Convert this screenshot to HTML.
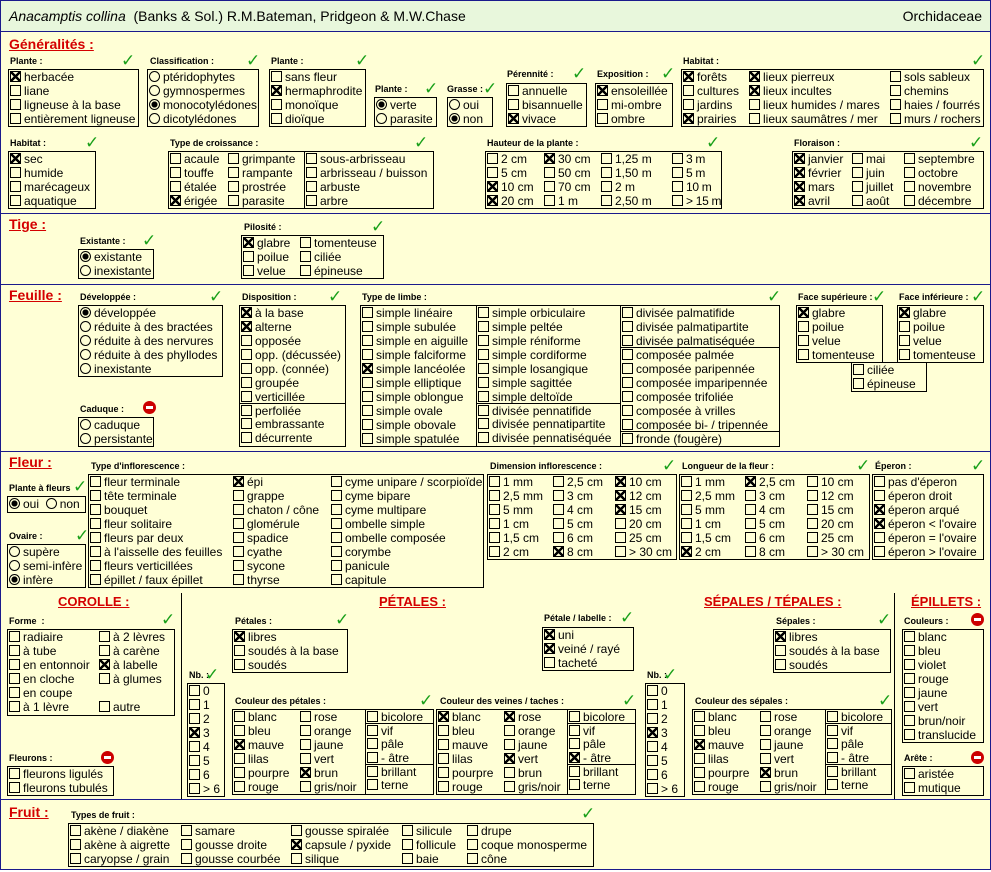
<!DOCTYPE html>
<html><head><meta charset="utf-8"><style>
*{box-sizing:border-box}
body{margin:0;width:991px;height:872px;background:#fff;position:relative;overflow:hidden;font-family:"Liberation Sans",Arial,sans-serif}
#pg{position:absolute;left:0;top:0;width:991px;height:870px;background:#ffffd6;border:1px solid #1a1a8c}
#hd{position:absolute;left:0;top:0;width:989px;height:31px;background:#e8f7dc;border-bottom:1px solid #1a1a8c;font-size:14px;line-height:31px}
.hl{position:absolute;left:0;width:989px;height:1px;background:#1a1a8c}
.vl{position:absolute;width:1px;background:#000}
.st{position:absolute;color:#d40000;font-weight:bold;font-size:14px;text-decoration:underline;line-height:16px}
.t{position:absolute;font-weight:bold;font-size:9px;line-height:10px;white-space:nowrap}
.k{position:absolute;color:#1aa01a;font-size:17px;line-height:18px;font-family:"DejaVu Sans",sans-serif}
.no{position:absolute;width:13px;height:13px;border-radius:50%;background:#c00}
.no:after{content:"";position:absolute;left:3px;top:5px;width:7px;height:3px;background:#fff}
.b{position:absolute;border:1px solid #000;display:flex;font-size:12px;line-height:14px;white-space:nowrap;overflow:hidden}
.b>div{flex:none}
p{margin:0;height:14px;padding-left:1px}
p.s{border-top:1px solid #000;height:14px;margin-top:-1px}
.L{border-left:1px solid #000}
i{display:inline-block;width:11px;height:11px;border:1px solid #000;vertical-align:-1px;margin-right:3px}
i.x{background:linear-gradient(45deg,transparent 40%,#000 40%,#000 60%,transparent 60%),linear-gradient(-45deg,transparent 40%,#000 40%,#000 60%,transparent 60%)}
u{display:inline-block;width:11px;height:11px;border:1px solid #000;border-radius:50%;vertical-align:-1px;margin-right:3px;text-decoration:none}
u.x{background:radial-gradient(circle,#000 45%,transparent 50%)}
</style></head><body><div id="pg">
<div id="hd"><span style="position:absolute;left:8px"><i style="all:unset;font-style:italic">Anacamptis collina</i>&nbsp; (Banks &amp; Sol.) R.M.Bateman, Pridgeon &amp; M.W.Chase</span><span style="position:absolute;right:8px">Orchidaceae</span></div>

<div class="hl" style="top:212px"></div>
<div class="hl" style="top:283px"></div>
<div class="hl" style="top:450px"></div>
<div class="hl" style="top:798px"></div>
<div class="vl" style="left:180px;top:592px;height:206px"></div>
<div class="vl" style="left:893px;top:592px;height:206px"></div>

<div class="st" style="left:8px;top:35px">Généralités :</div>
<div class="t" style="left:9px;top:55px">Plante :</div><div class="k" style="left:120px;top:51px">✓</div>
<div class="b" style="left:7px;top:68px;width:131px;height:58px"><div><p><i class="x"></i>herbacée</p><p><i></i>liane</p><p><i></i>ligneuse à la base</p><p><i></i>entièrement ligneuse</p></div></div>
<div class="t" style="left:149px;top:55px">Classification :</div><div class="k" style="left:245px;top:51px">✓</div>
<div class="b" style="left:146px;top:68px;width:112px;height:58px"><div><p><u></u>ptéridophytes</p><p><u></u>gymnospermes</p><p><u class="x"></u>monocotylédones</p><p><u></u>dicotylédones</p></div></div>
<div class="t" style="left:270px;top:55px">Plante :</div><div class="k" style="left:354px;top:51px">✓</div>
<div class="b" style="left:268px;top:68px;width:97px;height:58px"><div><p><i></i>sans fleur</p><p><i class="x"></i>hermaphrodite</p><p><i></i>monoïque</p><p><i></i>dioïque</p></div></div>
<div class="t" style="left:374px;top:83px">Plante :</div><div class="k" style="left:423px;top:79px">✓</div>
<div class="b" style="left:373px;top:96px;width:63px;height:30px"><div><p><u class="x"></u>verte</p><p><u></u>parasite</p></div></div>
<div class="t" style="left:446px;top:83px">Grasse :</div><div class="k" style="left:482px;top:79px">✓</div>
<div class="b" style="left:446px;top:96px;width:46px;height:30px"><div><p><u></u>oui</p><p><u class="x"></u>non</p></div></div>
<div class="t" style="left:506px;top:68px">Pérennité :</div><div class="k" style="left:571px;top:64px">✓</div>
<div class="b" style="left:505px;top:82px;width:81px;height:44px"><div><p><i></i>annuelle</p><p><i></i>bisannuelle</p><p><i class="x"></i>vivace</p></div></div>
<div class="t" style="left:596px;top:68px">Exposition :</div><div class="k" style="left:660px;top:64px">✓</div>
<div class="b" style="left:594px;top:82px;width:78px;height:44px"><div><p><i class="x"></i>ensoleillée</p><p><i></i>mi-ombre</p><p><i></i>ombre</p></div></div>
<div class="t" style="left:682px;top:55px">Habitat :</div><div class="k" style="left:970px;top:51px">✓</div>
<div class="b" style="left:680px;top:68px;width:303px;height:58px"><div style="width:66px"><p><i class="x"></i>forêts</p><p><i></i>cultures</p><p><i></i>jardins</p><p><i class="x"></i>prairies</p></div><div style="width:141px"><p><i class="x"></i>lieux pierreux</p><p><i class="x"></i>lieux incultes</p><p><i></i>lieux humides / mares</p><p><i></i>lieux saumâtres / mer</p></div><div><p><i></i>sols sableux</p><p><i></i>chemins</p><p><i></i>haies / fourrés</p><p><i></i>murs / rochers</p></div></div>

<div class="t" style="left:9px;top:137px">Habitat :</div><div class="k" style="left:84px;top:133px">✓</div>
<div class="b" style="left:7px;top:150px;width:88px;height:58px"><div><p><i class="x"></i>sec</p><p><i></i>humide</p><p><i></i>marécageux</p><p><i></i>aquatique</p></div></div>
<div class="t" style="left:169px;top:137px">Type de croissance :</div><div class="k" style="left:413px;top:133px">✓</div>
<div class="b" style="left:167px;top:150px;width:266px;height:58px"><div style="width:58px"><p><i></i>acaule</p><p><i></i>touffe</p><p><i></i>étalée</p><p><i class="x"></i>érigée</p></div><div style="width:77px"><p><i></i>grimpante</p><p><i></i>rampante</p><p><i></i>prostrée</p><p><i></i>parasite</p></div><div class="L" style="flex:1"><p><i></i>sous-arbrisseau</p><p><i></i>arbrisseau / buisson</p><p><i></i>arbuste</p><p><i></i>arbre</p></div></div>
<div class="t" style="left:486px;top:137px">Hauteur de la plante :</div><div class="k" style="left:705px;top:133px">✓</div>
<div class="b" style="left:484px;top:150px;width:237px;height:58px"><div style="width:57px"><p><i></i>2 cm</p><p><i></i>5 cm</p><p><i class="x"></i>10 cm</p><p><i class="x"></i>20 cm</p></div><div style="width:57px"><p><i class="x"></i>30 cm</p><p><i></i>50 cm</p><p><i></i>70 cm</p><p><i></i>1 m</p></div><div style="width:71px"><p><i></i>1,25 m</p><p><i></i>1,50 m</p><p><i></i>2 m</p><p><i></i>2,50 m</p></div><div style="letter-spacing:-0.3px"><p><i></i>3 m</p><p><i></i>5 m</p><p><i></i>10 m</p><p><i></i>&gt; 15 m</p></div></div>
<div class="t" style="left:793px;top:137px">Floraison :</div><div class="k" style="left:968px;top:133px">✓</div>
<div class="b" style="left:791px;top:150px;width:192px;height:58px"><div style="width:58px"><p><i class="x"></i>janvier</p><p><i class="x"></i>février</p><p><i class="x"></i>mars</p><p><i class="x"></i>avril</p></div><div style="width:52px"><p><i></i>mai</p><p><i></i>juin</p><p><i></i>juillet</p><p><i></i>août</p></div><div><p><i></i>septembre</p><p><i></i>octobre</p><p><i></i>novembre</p><p><i></i>décembre</p></div></div>

<div class="st" style="left:8px;top:215px">Tige :</div>
<div class="t" style="left:79px;top:235px">Existante :</div><div class="k" style="left:141px;top:231px">✓</div>
<div class="b" style="left:77px;top:248px;width:76px;height:30px"><div><p><u class="x"></u>existante</p><p><u></u>inexistante</p></div></div>
<div class="t" style="left:243px;top:221px">Pilosité :</div><div class="k" style="left:370px;top:217px">✓</div>
<div class="b" style="left:240px;top:234px;width:143px;height:44px"><div style="width:57px"><p><i class="x"></i>glabre</p><p><i></i>poilue</p><p><i></i>velue</p></div><div><p><i></i>tomenteuse</p><p><i></i>ciliée</p><p><i></i>épineuse</p></div></div>

<div class="st" style="left:8px;top:286px">Feuille :</div>
<div class="t" style="left:79px;top:291px">Développée :</div><div class="k" style="left:208px;top:287px">✓</div>
<div class="b" style="left:77px;top:304px;width:145px;height:72px"><div><p><u class="x"></u>développée</p><p><u></u>réduite à des bractées</p><p><u></u>réduite à des nervures</p><p><u></u>réduite à des phyllodes</p><p><u></u>inexistante</p></div></div>
<div class="t" style="left:79px;top:403px">Caduque :</div><div class="no" style="left:142px;top:400px"></div>
<div class="b" style="left:77px;top:416px;width:76px;height:30px"><div><p><u></u>caduque</p><p><u></u>persistante</p></div></div>
<div class="t" style="left:241px;top:291px">Disposition :</div><div class="k" style="left:327px;top:287px">✓</div>
<div class="b" style="left:238px;top:304px;width:107px;height:142px"><div style="flex:1"><p><i class="x"></i>à la base</p><p><i class="x"></i>alterne</p><p><i></i>opposée</p><p><i></i>opp. (décussée)</p><p><i></i>opp. (connée)</p><p><i></i>groupée</p><p><i></i>verticillée</p><p class="s"><i></i>perfoliée</p><p><i></i>embrassante</p><p><i></i>décurrente</p></div></div>
<div class="t" style="left:361px;top:291px">Type de limbe :</div><div class="k" style="left:766px;top:287px">✓</div>
<div class="b" style="left:359px;top:304px;width:117px;height:142px"><div><p><i></i>simple linéaire</p><p><i></i>simple subulée</p><p><i></i>simple en aiguille</p><p><i></i>simple falciforme</p><p><i class="x"></i>simple lancéolée</p><p><i></i>simple elliptique</p><p><i></i>simple oblongue</p><p><i></i>simple ovale</p><p><i></i>simple obovale</p><p><i></i>simple spatulée</p></div></div>
<div class="b" style="left:475px;top:304px;width:145px;height:142px"><div style="flex:1"><p><i></i>simple orbiculaire</p><p><i></i>simple peltée</p><p><i></i>simple réniforme</p><p><i></i>simple cordiforme</p><p><i></i>simple losangique</p><p><i></i>simple sagittée</p><p><i></i>simple deltoïde</p><p class="s"><i></i>divisée pennatifide</p><p><i></i>divisée pennatipartite</p><p><i></i>divisée pennatiséquée</p></div></div>
<div class="b" style="left:619px;top:304px;width:160px;height:43px"><div><p><i></i>divisée palmatifide</p><p><i></i>divisée palmatipartite</p><p><i></i>divisée palmatiséquée</p></div></div>
<div class="b" style="left:619px;top:346px;width:160px;height:100px"><div style="flex:1"><p><i></i>composée palmée</p><p><i></i>composée paripennée</p><p><i></i>composée imparipennée</p><p><i></i>composée trifoliée</p><p><i></i>composée à vrilles</p><p><i></i>composée bi- / tripennée</p><p class="s"><i></i>fronde (fougère)</p></div></div>
<div class="t" style="left:797px;top:291px">Face supérieure :</div><div class="k" style="left:871px;top:287px">✓</div>
<div class="b" style="left:795px;top:304px;width:87px;height:58px"><div><p><i class="x"></i>glabre</p><p><i></i>poilue</p><p><i></i>velue</p><p><i></i>tomenteuse</p></div></div>
<div class="t" style="left:898px;top:291px">Face inférieure :</div><div class="k" style="left:970px;top:287px">✓</div>
<div class="b" style="left:896px;top:304px;width:87px;height:58px"><div><p><i class="x"></i>glabre</p><p><i></i>poilue</p><p><i></i>velue</p><p><i></i>tomenteuse</p></div></div>
<div class="b" style="left:850px;top:361px;width:76px;height:30px"><div><p><i></i>ciliée</p><p><i></i>épineuse</p></div></div>

<div class="st" style="left:8px;top:453px">Fleur :</div>
<div class="t" style="left:8px;top:482px">Plante à fleurs</div><div class="k" style="left:72px;top:477px">✓</div>
<div class="b" style="left:6px;top:495px;width:79px;height:17px;line-height:15px"><div><p><u class="x"></u>oui&nbsp;&nbsp;<u></u>non</p></div></div>
<div class="t" style="left:8px;top:530px">Ovaire :</div><div class="k" style="left:74px;top:526px">✓</div>
<div class="b" style="left:6px;top:543px;width:79px;height:44px"><div><p><u></u>supère</p><p><u></u>semi-infère</p><p><u class="x"></u>infère</p></div></div>
<div class="t" style="left:90px;top:460px">Type d'inflorescence :</div>
<div class="b" style="left:87px;top:473px;width:396px;height:114px"><div style="width:143px"><p><i></i>fleur terminale</p><p><i></i>tête terminale</p><p><i></i>bouquet</p><p><i></i>fleur solitaire</p><p><i></i>fleurs par deux</p><p><i></i>à l'aisselle des feuilles</p><p><i></i>fleurs verticillées</p><p><i></i>épillet / faux épillet</p></div><div style="width:98px"><p><i class="x"></i>épi</p><p><i></i>grappe</p><p><i></i>chaton / cône</p><p><i></i>glomérule</p><p><i></i>spadice</p><p><i></i>cyathe</p><p><i></i>sycone</p><p><i></i>thyrse</p></div><div><p><i></i>cyme unipare / scorpioïde</p><p><i></i>cyme bipare</p><p><i></i>cyme multipare</p><p><i></i>ombelle simple</p><p><i></i>ombelle composée</p><p><i></i>corymbe</p><p><i></i>panicule</p><p><i></i>capitule</p></div></div>
<div class="t" style="left:489px;top:460px">Dimension inflorescence :</div><div class="k" style="left:661px;top:456px">✓</div>
<div class="b" style="left:486px;top:473px;width:190px;height:86px"><div style="width:64px"><p><i></i>1 mm</p><p><i></i>2,5 mm</p><p><i></i>5 mm</p><p><i></i>1 cm</p><p><i></i>1,5 cm</p><p><i></i>2 cm</p></div><div style="width:62px"><p><i></i>2,5 cm</p><p><i></i>3 cm</p><p><i></i>4 cm</p><p><i></i>5 cm</p><p><i></i>6 cm</p><p><i class="x"></i>8 cm</p></div><div><p><i class="x"></i>10 cm</p><p><i class="x"></i>12 cm</p><p><i class="x"></i>15 cm</p><p><i></i>20 cm</p><p><i></i>25 cm</p><p><i></i>&gt; 30 cm</p></div></div>
<div class="t" style="left:681px;top:460px">Longueur de la fleur :</div><div class="k" style="left:855px;top:456px">✓</div>
<div class="b" style="left:678px;top:473px;width:191px;height:86px"><div style="width:64px"><p><i></i>1 mm</p><p><i></i>2,5 mm</p><p><i></i>5 mm</p><p><i></i>1 cm</p><p><i></i>1,5 cm</p><p><i class="x"></i>2 cm</p></div><div style="width:62px"><p><i class="x"></i>2,5 cm</p><p><i></i>3 cm</p><p><i></i>4 cm</p><p><i></i>5 cm</p><p><i></i>6 cm</p><p><i></i>8 cm</p></div><div><p><i></i>10 cm</p><p><i></i>12 cm</p><p><i></i>15 cm</p><p><i></i>20 cm</p><p><i></i>25 cm</p><p><i></i>&gt; 30 cm</p></div></div>
<div class="t" style="left:874px;top:460px">Éperon :</div><div class="k" style="left:970px;top:456px">✓</div>
<div class="b" style="left:871px;top:473px;width:112px;height:86px"><div><p><i></i>pas d'éperon</p><p><i></i>éperon droit</p><p><i class="x"></i>éperon arqué</p><p><i class="x"></i>éperon &lt; l'ovaire</p><p><i></i>éperon = l'ovaire</p><p><i></i>éperon &gt; l'ovaire</p></div></div>

<div class="st" style="left:57px;top:593px;font-size:13px">COROLLE :</div>
<div class="st" style="left:378px;top:593px;font-size:13px">PÉTALES :</div>
<div class="st" style="left:703px;top:593px;font-size:13px">SÉPALES / TÉPALES :</div>
<div class="st" style="left:910px;top:593px;font-size:13px">ÉPILLETS :</div>
<div class="t" style="left:8px;top:615px">Forme&nbsp; :</div><div class="k" style="left:160px;top:610px">✓</div>
<div class="b" style="left:6px;top:628px;width:168px;height:87px"><div style="width:90px"><p><i></i>radiaire</p><p><i></i>à tube</p><p><i></i>en entonnoir</p><p><i></i>en cloche</p><p><i></i>en coupe</p><p><i></i>à 1 lèvre</p></div><div><p><i></i>à 2 lèvres</p><p><i></i>à carène</p><p><i class="x"></i>à labelle</p><p><i></i>à glumes</p><p></p><p><i></i>autre</p></div></div>
<div class="t" style="left:8px;top:752px">Fleurons :</div><div class="no" style="left:100px;top:750px"></div>
<div class="b" style="left:6px;top:765px;width:107px;height:30px"><div><p><i></i>fleurons ligulés</p><p><i></i>fleurons tubulés</p></div></div>
<div class="t" style="left:188px;top:669px">Nb. :</div><div class="k" style="left:204px;top:665px">✓</div>
<div class="b" style="left:186px;top:682px;width:38px;height:114px"><div><p><i></i>0</p><p><i></i>1</p><p><i></i>2</p><p><i class="x"></i>3</p><p><i></i>4</p><p><i></i>5</p><p><i></i>6</p><p><i></i>&gt; 6</p></div></div>
<div class="t" style="left:234px;top:615px">Pétales :</div><div class="k" style="left:334px;top:610px">✓</div>
<div class="b" style="left:231px;top:628px;width:116px;height:44px"><div><p><i class="x"></i>libres</p><p><i></i>soudés à la base</p><p><i></i>soudés</p></div></div>
<div class="t" style="left:543px;top:612px">Pétale / labelle :</div><div class="k" style="left:619px;top:608px">✓</div>
<div class="b" style="left:541px;top:626px;width:92px;height:44px"><div><p><i class="x"></i>uni</p><p><i class="x"></i>veiné / rayé</p><p><i></i>tacheté</p></div></div>
<div class="t" style="left:234px;top:695px">Couleur des pétales :</div><div class="k" style="left:418px;top:691px">✓</div>
<div class="b" style="left:231px;top:708px;width:202px;height:86px"><div style="width:66px"><p><i></i>blanc</p><p><i></i>bleu</p><p><i class="x"></i>mauve</p><p><i></i>lilas</p><p><i></i>pourpre</p><p><i></i>rouge</p></div><div style="width:66px"><p><i></i>rose</p><p><i></i>orange</p><p><i></i>jaune</p><p><i></i>vert</p><p><i class="x"></i>brun</p><p><i></i>gris/noir</p></div><div class="L" style="flex:1"><p><i></i>bicolore</p><p class="s"><i></i>vif</p><p><i></i>pâle</p><p><i></i>- âtre</p><p class="s"><i></i>brillant</p><p><i></i>terne</p></div></div>
<div class="t" style="left:439px;top:695px">Couleur des veines / taches :</div><div class="k" style="left:621px;top:691px">✓</div>
<div class="b" style="left:435px;top:708px;width:200px;height:86px"><div style="width:66px"><p><i class="x"></i>blanc</p><p><i></i>bleu</p><p><i></i>mauve</p><p><i></i>lilas</p><p><i></i>pourpre</p><p><i></i>rouge</p></div><div style="width:64px"><p><i class="x"></i>rose</p><p><i></i>orange</p><p><i></i>jaune</p><p><i class="x"></i>vert</p><p><i></i>brun</p><p><i></i>gris/noir</p></div><div class="L" style="flex:1"><p><i></i>bicolore</p><p class="s"><i></i>vif</p><p><i></i>pâle</p><p><i class="x"></i>- âtre</p><p class="s"><i></i>brillant</p><p><i></i>terne</p></div></div>
<div class="t" style="left:775px;top:615px">Sépales :</div><div class="k" style="left:876px;top:610px">✓</div>
<div class="b" style="left:772px;top:628px;width:118px;height:44px"><div><p><i class="x"></i>libres</p><p><i></i>soudés à la base</p><p><i></i>soudés</p></div></div>
<div class="t" style="left:646px;top:669px">Nb. :</div><div class="k" style="left:662px;top:665px">✓</div>
<div class="b" style="left:644px;top:682px;width:40px;height:114px"><div><p><i></i>0</p><p><i></i>1</p><p><i></i>2</p><p><i class="x"></i>3</p><p><i></i>4</p><p><i></i>5</p><p><i></i>6</p><p><i></i>&gt; 6</p></div></div>
<div class="t" style="left:694px;top:695px">Couleur des sépales :</div><div class="k" style="left:877px;top:691px">✓</div>
<div class="b" style="left:691px;top:708px;width:200px;height:86px"><div style="width:66px"><p><i></i>blanc</p><p><i></i>bleu</p><p><i class="x"></i>mauve</p><p><i></i>lilas</p><p><i></i>pourpre</p><p><i></i>rouge</p></div><div style="width:66px"><p><i></i>rose</p><p><i></i>orange</p><p><i></i>jaune</p><p><i></i>vert</p><p><i class="x"></i>brun</p><p><i></i>gris/noir</p></div><div class="L" style="flex:1"><p><i></i>bicolore</p><p class="s"><i></i>vif</p><p><i></i>pâle</p><p><i></i>- âtre</p><p class="s"><i></i>brillant</p><p><i></i>terne</p></div></div>
<div class="t" style="left:903px;top:615px">Couleurs :</div><div class="no" style="left:970px;top:612px"></div>
<div class="b" style="left:901px;top:628px;width:82px;height:114px"><div><p><i></i>blanc</p><p><i></i>bleu</p><p><i></i>violet</p><p><i></i>rouge</p><p><i></i>jaune</p><p><i></i>vert</p><p><i></i>brun/noir</p><p><i></i>translucide</p></div></div>
<div class="t" style="left:903px;top:752px">Arête :</div><div class="no" style="left:970px;top:750px"></div>
<div class="b" style="left:901px;top:765px;width:82px;height:30px"><div><p><i></i>aristée</p><p><i></i>mutique</p></div></div>

<div class="st" style="left:8px;top:803px">Fruit :</div>
<div class="t" style="left:70px;top:809px">Types de fruit :</div><div class="k" style="left:580px;top:804px">✓</div>
<div class="b" style="left:67px;top:822px;width:526px;height:44px"><div style="width:111px"><p><i></i>akène / diakène</p><p><i></i>akène à aigrette</p><p><i></i>caryopse / grain</p></div><div style="width:110px"><p><i></i>samare</p><p><i></i>gousse droite</p><p><i></i>gousse courbée</p></div><div style="width:111px"><p><i></i>gousse spiralée</p><p><i class="x"></i>capsule / pyxide</p><p><i></i>silique</p></div><div style="width:65px"><p><i></i>silicule</p><p><i></i>follicule</p><p><i></i>baie</p></div><div><p><i></i>drupe</p><p><i></i>coque monosperme</p><p><i></i>cône</p></div></div>
</div></body></html>
